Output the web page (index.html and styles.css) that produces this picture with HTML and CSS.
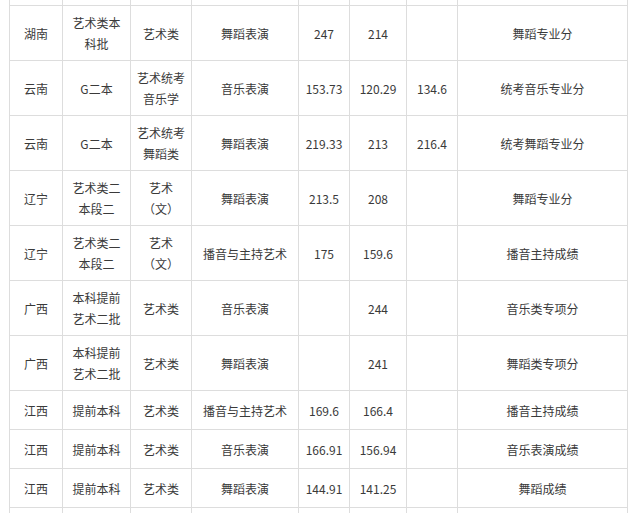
FILE: index.html
```html
<!DOCTYPE html>
<html lang="zh-CN">
<head>
<meta charset="utf-8">
<title>艺术类分数线</title>
<link rel="stylesheet" href="styles.css">
</head>
<body>
<table class="score-table">
  <colgroup>
    <col class="c1"><col class="c2"><col class="c3"><col class="c4">
    <col class="c5"><col class="c6"><col class="c7"><col class="c8">
  </colgroup>
  <tbody>
    <tr class="tall">
      <td></td><td></td><td></td><td></td><td></td><td></td><td></td><td></td>
    </tr>
    <tr class="tall">
      <td>湖南</td><td>艺术类本<br>科批</td><td>艺术类</td><td>舞蹈表演</td><td>247</td><td>214</td><td></td><td>舞蹈专业分</td>
    </tr>
    <tr class="tall">
      <td>云南</td><td>G二本</td><td>艺术统考<br>音乐学</td><td>音乐表演</td><td>153.73</td><td>120.29</td><td>134.6</td><td>统考音乐专业分</td>
    </tr>
    <tr class="tall">
      <td>云南</td><td>G二本</td><td>艺术统考<br>舞蹈类</td><td>舞蹈表演</td><td>219.33</td><td>213</td><td>216.4</td><td>统考舞蹈专业分</td>
    </tr>
    <tr class="tall">
      <td>辽宁</td><td>艺术类二<br>本段二</td><td>艺术<br>（文）</td><td>舞蹈表演</td><td>213.5</td><td>208</td><td></td><td>舞蹈专业分</td>
    </tr>
    <tr class="tall">
      <td>辽宁</td><td>艺术类二<br>本段二</td><td>艺术<br>（文）</td><td>播音与主持艺术</td><td>175</td><td>159.6</td><td></td><td>播音主持成绩</td>
    </tr>
    <tr class="tall">
      <td>广西</td><td>本科提前<br>艺术二批</td><td>艺术类</td><td>音乐表演</td><td></td><td>244</td><td></td><td>音乐类专项分</td>
    </tr>
    <tr class="tall">
      <td>广西</td><td>本科提前<br>艺术二批</td><td>艺术类</td><td>舞蹈表演</td><td></td><td>241</td><td></td><td>舞蹈类专项分</td>
    </tr>
    <tr>
      <td>江西</td><td>提前本科</td><td>艺术类</td><td>播音与主持艺术</td><td>169.6</td><td>166.4</td><td></td><td>播音主持成绩</td>
    </tr>
    <tr>
      <td>江西</td><td>提前本科</td><td>艺术类</td><td>音乐表演</td><td>166.91</td><td>156.94</td><td></td><td>音乐表演成绩</td>
    </tr>
    <tr>
      <td>江西</td><td>提前本科</td><td>艺术类</td><td>舞蹈表演</td><td>144.91</td><td>141.25</td><td></td><td>舞蹈成绩</td>
    </tr>
    <tr>
      <td></td><td></td><td></td><td></td><td></td><td></td><td></td><td></td>
    </tr>
  </tbody>
</table>
</body>
</html>
```

FILE: styles.css
```css
html, body {
  margin: 0;
  padding: 0;
  background: #ffffff;
  overflow: hidden;
}

.score-table {
  margin: -50px 0 0 9px;
  width: 618px;
  table-layout: fixed;
  border-collapse: collapse;
  font-family: "Noto Sans CJK SC", "Noto Sans", sans-serif;
  font-size: 12px;
  color: #3a3a3a;
}

.c1 { width: 53px; }
.c2 { width: 68px; }
.c3 { width: 61px; }
.c4 { width: 107px; }
.c5 { width: 51px; }
.c6 { width: 57px; }
.c7 { width: 51px; }
.c8 { width: 170px; }

.score-table td {
  border: 1px solid #dddddd;
  padding: 6px 2px;
  height: 26px;
  line-height: 21px;
  text-align: center;
  vertical-align: middle;
  white-space: nowrap;
}

.score-table tr.tall td {
  height: 42px;
}
```
